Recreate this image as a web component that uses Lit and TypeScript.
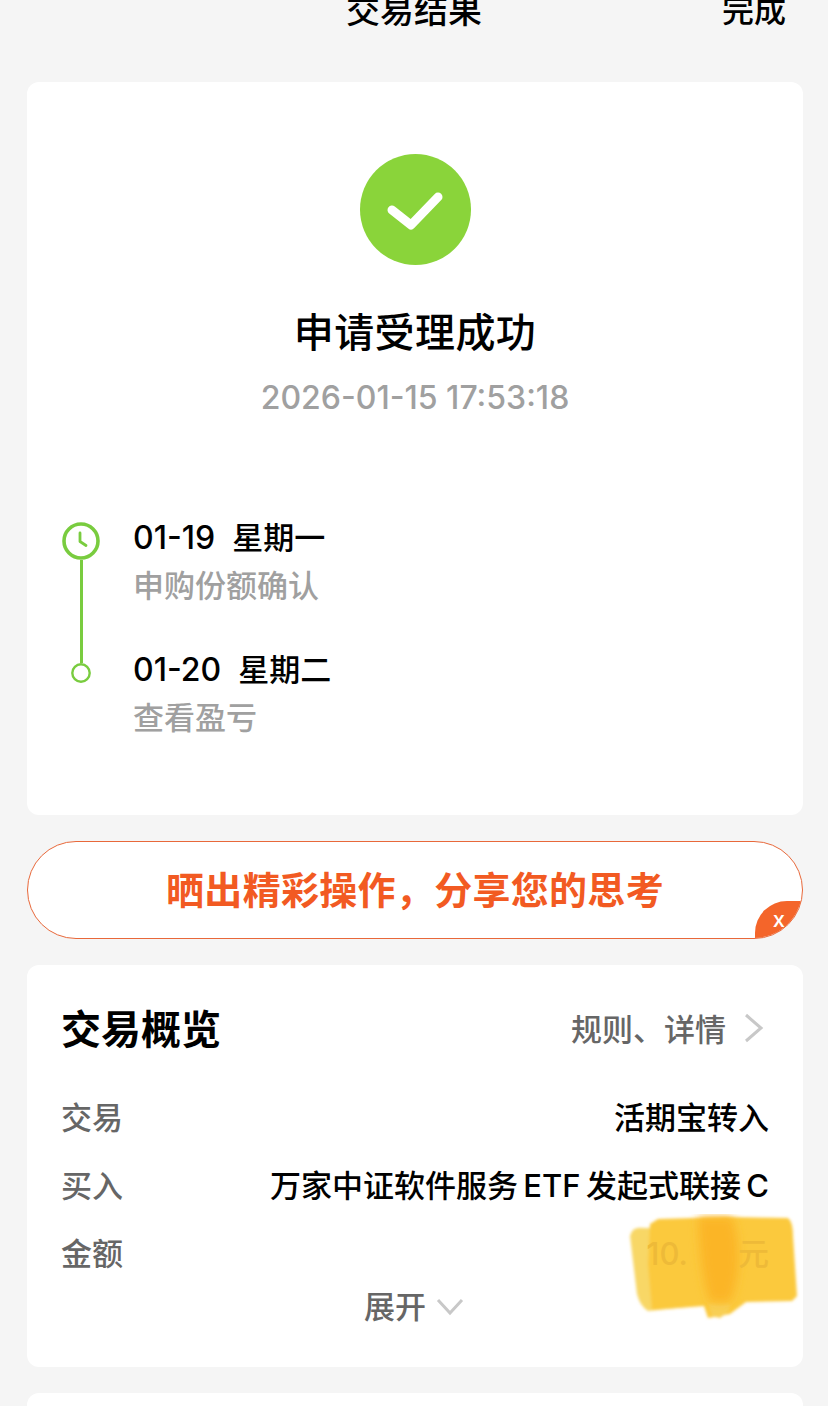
import { LitElement, html, css } from "lit";
import { customElement } from "lit/decorators.js";

@customElement("app-root")
export class AppRoot extends LitElement {
  static styles = css`
    :host {
      display: block;
      height: 1406px;
      overflow: hidden;
      background: #f5f5f5;
      font-family: "Inter", "Noto Sans CJK SC", sans-serif;
      color: #000;
    }
    .nav {
      height: 22px;
      margin-bottom: 60px;
      display: grid;
      grid-template-columns: 1fr auto 1fr;
      align-items: center;
      padding: 0 42px;
      font-size: 34px;
      line-height: 22px;
      font-weight: 500;
    }
    .nav .title { grid-column: 2; }
    .nav .done { grid-column: 3; justify-self: end; font-size: 32px; }
    .card {
      margin: 0 25px 0 27px;
      background: #fff;
      border-radius: 12px;
    }
    .result {
      display: flex;
      flex-direction: column;
      padding: 72px 35px 77px;
      margin-bottom: 26px;
    }
    .tick { align-self: center; width: 111px; height: 111px; display: block; }
    .headline {
      margin-top: 48px;
      text-align: center;
      font-size: 40px;
      line-height: 40px;
      font-weight: 500;
      letter-spacing: 0.4px;
    }
    .stamp {
      margin-top: 25px;
      text-align: center;
      font-size: 32px;
      line-height: 40px;
      font-weight: 500;
      color: #a0a0a0;
    }
    .timeline { margin-top: 101px; display: flex; gap: 32px; }
    .rail { width: 40px; margin: 3px 0 0 -1px; display: flex; flex-direction: column; align-items: center; }
    .rail svg { display: block; flex: none; }
    .rail .bar { width: 3px; height: 103px; background: #79cc3f; }
    .steps { display: flex; flex-direction: column; gap: 44px; }
    .date { font-size: 31px; line-height: 40px; font-weight: 500; white-space: nowrap; margin-top: -1px; }
    .date .num { font-size: 32px; margin-right: 17px; }
    .sub { margin-top: 8px; font-size: 31px; line-height: 40px; font-weight: 500; color: #a0a0a0; }
    .steps > div + div .date { margin-top: 0; }
    .banner {
      position: relative;
      margin: 0 25px 26px 27px;
      height: 98px;
      box-sizing: border-box;
      padding-bottom: 6px;
      border: 1px solid #e8683a;
      border-radius: 49px;
      background: #fff;
      display: flex;
      align-items: center;
      justify-content: center;
      overflow: hidden;
      color: #f25a22;
      font-size: 38px;
      font-weight: 700;
      letter-spacing: 0.3px;
    }
    .close {
      position: absolute;
      right: -1px;
      bottom: -1px;
      width: 48px;
      height: 38px;
      background: #f4652a;
      border-top-left-radius: 32px;
      color: #fff;
      font-size: 22px;
      font-weight: 500;
      line-height: 36px;
      text-align: center;
      letter-spacing: 0;
    }
    .overview {
      position: relative;
      height: 402px;
      box-sizing: border-box;
      padding: 45px 34px 0 35px;
      margin-bottom: 26px;
    }
    .head { display: flex; justify-content: space-between; align-items: center; height: 40px; }
    .head h2 { margin: 0 0 0 -1px; font-size: 40px; line-height: 40px; font-weight: 700; }
    .link { display: flex; align-items: center; gap: 18px; padding-right: 5px; margin-top: -5px; font-size: 31px; font-weight: 500; color: #666; }
    .rows { margin-top: 48px; display: flex; flex-direction: column; gap: 28px; }
    .row { display: flex; justify-content: space-between; font-size: 31px; line-height: 40px; }
    .row .k { color: #666; font-weight: 500; margin-left: -1px; }
    .row .v { font-weight: 500; white-space: nowrap; }
    .amount { position: relative; z-index: 1; display: flex; gap: 50px; color: #eeba38; }
    .more {
      margin: 13px 0 0 -3px;
      display: flex;
      justify-content: center;
      align-items: center;
      gap: 10px;
      font-size: 31px;
      line-height: 40px;
      font-weight: 500;
      color: #666;
    }
    .smear { position: absolute; left: 599px; top: 249px; width: 175px; height: 110px; }
    .next { height: 60px; }
  `;

  render() {
    return html`
      <div class="nav"><span class="title">交易结果</span><span class="done">完成</span></div>

      <section class="card result">
        <svg class="tick" viewBox="0 0 111 111">
          <circle cx="55.5" cy="55.5" r="55.5" fill="#8ad43a"></circle>
          <path d="M32 56 L51 71 L78 43" fill="none" stroke="#fff" stroke-width="9" stroke-linecap="round" stroke-linejoin="round"></path>
        </svg>
        <div class="headline">申请受理成功</div>
        <div class="stamp">2026-01-15 17:53:18</div>
        <div class="timeline">
          <div class="rail">
            <svg width="38" height="38" viewBox="0 0 38 38">
              <circle cx="19" cy="19" r="17" fill="#fff" stroke="#79cc3f" stroke-width="3.6"></circle>
              <path d="M18 11 V19.5 L24 23.5" fill="none" stroke="#79cc3f" stroke-width="2.8" stroke-linecap="round" stroke-linejoin="round"></path>
            </svg>
            <div class="bar"></div>
            <svg width="20" height="20" viewBox="0 0 20 20">
              <circle cx="10" cy="10" r="8.7" fill="#fff" stroke="#79cc3f" stroke-width="2.4"></circle>
            </svg>
          </div>
          <div class="steps">
            <div>
              <div class="date"><span class="num">01-19</span>星期一</div>
              <div class="sub">申购份额确认</div>
            </div>
            <div>
              <div class="date"><span class="num">01-20</span>星期二</div>
              <div class="sub">查看盈亏</div>
            </div>
          </div>
        </div>
      </section>

      <div class="banner">
        晒出精彩操作，分享您的思考
        <span class="close">x</span>
      </div>

      <section class="card overview">
        <div class="head">
          <h2>交易概览</h2>
          <div class="link">
            规则、详情
            <svg width="20" height="30" viewBox="0 0 20 30">
              <path d="M2 2 L17 15 L2 28" fill="none" stroke="#c8c8c8" stroke-width="3"></path>
            </svg>
          </div>
        </div>
        <div class="rows">
          <div class="row"><span class="k">交易</span><span class="v">活期宝转入</span></div>
          <div class="row"><span class="k">买入</span><span class="v">万家中证软件服务&#8201;ETF&#8201;发起式联接&#8201;C</span></div>
          <div class="row"><span class="k">金额</span><span class="v amount"><span>10.</span><span>元</span></span></div>
        </div>
        <div class="more">
          展开
          <svg width="28" height="18" viewBox="0 0 28 18">
            <path d="M2 2 L14 15 L26 2" fill="none" stroke="#c8c8c8" stroke-width="3"></path>
          </svg>
        </div>
        <svg class="smear" viewBox="0 0 175 110">
          <defs>
            <filter id="soft" x="-10%" y="-10%" width="120%" height="120%"><feGaussianBlur stdDeviation="1.8"></feGaussianBlur></filter>
            <filter id="softer" x="-40%" y="-20%" width="180%" height="140%"><feGaussianBlur stdDeviation="5"></feGaussianBlur></filter>
          </defs>
          <g filter="url(#soft)">
            <path d="M4 22 Q6 12 18 14 L60 14 L60 93 L22 97 Q14 92 11 80 Z" fill="#f8d766"></path>
            <path d="M24 10 L32 5 L100 3 L162 4 Q167 8 167 22 L171 82 L166 87 L120 88 L104 100 L82 104 L78 92 L26 96 L22 50 Z" fill="#fbc93c"></path>
            <path d="M82 90 L104 90 L103 97 L94 104 L86 102 Z" fill="#f8cf55"></path>
          </g>
          <path d="M72 3 L106 3 Q114 25 112 55 Q110 75 104 88 L84 88 Q74 60 72 3 Z" fill="#fbb526" filter="url(#softer)"></path>
        </svg>
      </section>

      <section class="card next"></section>
    `;
  }
}
